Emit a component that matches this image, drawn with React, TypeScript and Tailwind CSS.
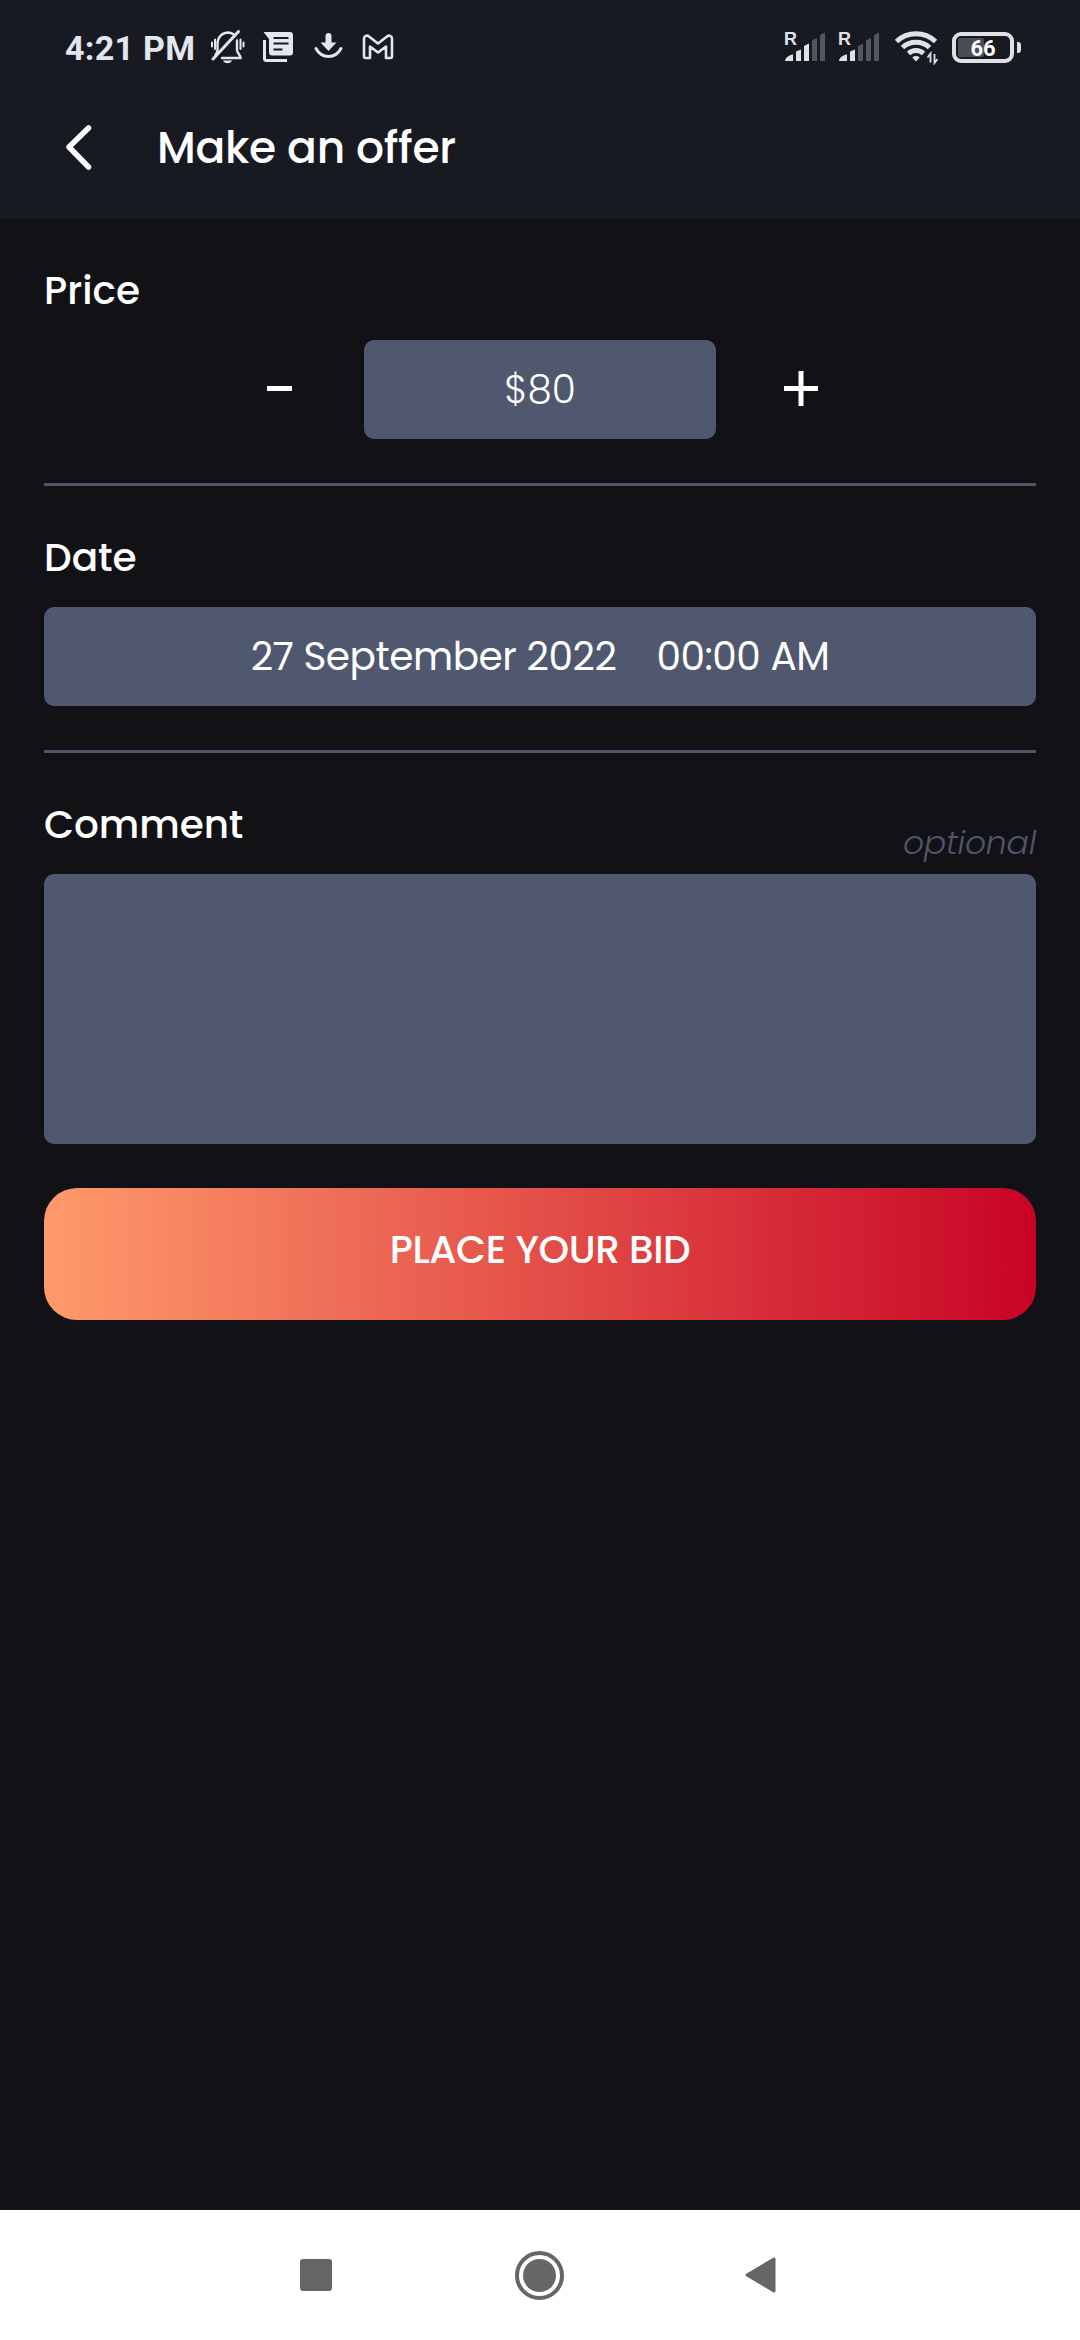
import { useState } from 'react'

const font = "font-['Poppins','Inter',sans-serif]";

function StatusBar() {
    return (
        <div className="h-[94px] flex items-center justify-between pl-[65px] pr-[59px] text-[#e3e6ee]">
            <div className="flex items-center">
                <span className="w-[130px] whitespace-nowrap font-[Roboto,sans-serif] font-bold text-[34px] leading-[40px] tracking-[0.3px] relative top-[1px]">4:21 PM</span>
                <svg className="ml-[15px]" width="36" height="36" viewBox="0 0 36 36" fill="none" stroke="currentColor" strokeWidth="2.4" strokeLinecap="round">
                    <path d="M7.500 21V15C7.500 8.500 11.500 4 17.500 3.500c2.500 0 4.500 .6 6 1.800M27 11.500v9.500c0 3 3.500 4.500 3.500 8H12M7.500 21c0 2-1 3.500-2 5" />
                    <path d="M28.500 2.500L3 30" strokeWidth="3" />
                    <path d="M2 13.500v4M5 10.500v9.500M30.500 10.500v9.500M33.500 13.500v4" strokeWidth="2" />
                    <path d="M13 31.500h9c-.7 1.800-2.300 2.700-4.500 2.700s-3.800-.9-4.500-2.700z" fill="currentColor" stroke="none" />
                </svg>
                <svg className="ml-[16px]" width="32" height="32" viewBox="0 0 32 32">
                    <path d="M1.500 1H28a3 3 0 0 1 3 3v17.500a3 3 0 0 1-3 3H10a3 3 0 0 1-3-3V8z" fill="currentColor" />
                    <path d="M11.500 7h15M11.500 12.500h15M11.500 18.500h9" stroke="#181a22" strokeWidth="2.200" />
                    <path d="M2.500 9v18.500a2 2 0 0 0 2 2H25" fill="none" stroke="currentColor" strokeWidth="3" />
                </svg>
                <svg className="ml-[19px]" width="32" height="30" viewBox="0 0 32 30">
                    <path d="M12.500 4a3 3 0 0 1 6 0v6.500h5L15.500 19 7.500 10.500h5z" fill="currentColor" />
                    <path d="M3 16.500C6 22 10 24.500 15.500 24.500S25 22 28 16.500" fill="none" stroke="currentColor" strokeWidth="3" strokeLinecap="round" />
                </svg>
                <svg className="ml-[17px]" width="32" height="26" viewBox="0 0 32 26" fill="none" stroke="currentColor" strokeWidth="2.600" strokeLinejoin="round">
                    <path d="M2 4.500C2 1.800 5 .9 7 2.500l9 7 9-7c2-1.600 5-.7 5 2V22.500a1.500 1.500 0 0 1-1.500 1.500H24V12.500l-8 6-8-6V24H3.500A1.500 1.500 0 0 1 2 22.500z" />
                </svg>
            </div>
            <div className="flex items-center text-[#dfe1e6]">
                <Signal strength={3} />
                <Signal strength={2} />
                <svg className="ml-[3px]" width="44" height="36" viewBox="0 0 44 36" fill="none" stroke="currentColor" strokeWidth="5">
                    <path d="M2.500 12.500C13.500 2.300 30.500 2.300 41.500 12.500" />
                    <path d="M8.500 18.500c7.500-7 19.500-7 27 0" />
                    <path d="M14.500 24.500c4.300-4 10.700-4 15 0" />
                    <path d="M18.300 28.500a5.500 5.500 0 0 1 7.400 0L22 32.500z" fill="currentColor" stroke="none" />
                    <path d="M36.500 33.500v-9l-3 4M40.500 25v9l3-4" strokeWidth="1.800" />
                </svg>
                <div className="ml-[14px] w-[62px] h-[31px] rounded-[9px] border-4 border-[#dfe1e6] p-[2px] flex relative">
                    <div className="w-[26px] bg-[#4b4d53] rounded-[2px]"></div>
                    <span className="absolute inset-0 text-center font-[Roboto,sans-serif] font-bold text-[22px] leading-[25px] text-white">66</span>
                </div>
                <div className="ml-[3px] w-[4px] h-[11px] rounded-r-[3px] bg-[#dfe1e6]"></div>
            </div>
        </div>
    )
}

function Signal({ strength }: { strength: number }) {
    const bars = [
        'M0 30c0-3 4-6 8-6.500V30z',
        'M11 30V20.500l5-2V30z',
        'M19 30V15l5-2.500V30z',
        'M27 30V9.500L32 7v23z',
        'M35 30V4l5-2.500V30z',
    ];
    return (
        <svg className="mr-[11px]" width="43" height="40" viewBox="-2 -4 43 40">
            {bars.map((d, i) => (
                <path key={i} d={d} fill={i < strength ? '#dfe1e6' : '#54565d'} />
            ))}
            <text x="-1" y="14" fontFamily="Liberation Sans, sans-serif" fontSize="18" fontWeight="700" fill="#dfe1e6">R</text>
        </svg>
    )
}

function Header() {
    return (
        <div className="h-[125px] pb-[17px] flex items-center pl-[64px]">
            <svg width="30" height="48" viewBox="0 0 30 48" fill="none" stroke="#ffffff" strokeWidth="5.500" strokeLinecap="round" strokeLinejoin="round">
                <path d="M24.500 4L5 23l19.500 20" />
            </svg>
            <h1 className="ml-[63px] text-[44px] leading-[60px] font-medium tracking-[-0.3px]">Make an offer</h1>
        </div>
    )
}

function Divider() {
    return <div className="mt-[44px] h-[3px] bg-[#50556a]"></div>
}

export default function App() {
    const [price, setPrice] = useState(80);

    return (
        <div className={`${font} w-[1080px] h-[2340px] flex flex-col bg-[#111116] text-white`}>
            <div className="bg-[#181a22]">
                <StatusBar />
                <Header />
            </div>
            <div className="flex-1 px-[44px]">
                <div className="pt-[44px]">
                    <h2 className="h-[77px] text-[39px] leading-[56px] font-medium">Price</h2>
                    <div className="flex items-center justify-center">
                        <button className="w-[42px] h-[60px] mr-[63px] flex items-center justify-center" onClick={() => setPrice(price - 1)}>
                            <span className="w-[25px] h-[5px] mr-[1px] mb-[2px] bg-white"></span>
                        </button>
                        <div className="w-[352px] h-[99px] pt-[2px] rounded-[10px] bg-[#50586f] flex items-center justify-center text-[39px] font-light">${price}</div>
                        <button className="w-[42px] h-[60px] ml-[63px] flex items-center justify-center" onClick={() => setPrice(price + 1)}>
                            <svg className="ml-[2px] mb-[2px]" width="34" height="35" viewBox="0 0 34 35" fill="none" stroke="#ffffff" strokeWidth="5">
                                <path d="M0 17.500h34M17 0v35" />
                            </svg>
                        </button>
                    </div>
                    <Divider />
                </div>
                <div className="pt-[44px]">
                    <h2 className="h-[77px] text-[39px] leading-[56px] font-medium">Date</h2>
                    <div className="h-[99px] pt-[2px] rounded-[10px] bg-[#50586f] flex items-center justify-center text-[39px] tracking-[-0.45px]">
                        <span>27 September 2022</span>
                        <span className="ml-[40px]">00:00 AM</span>
                    </div>
                    <Divider />
                </div>
                <div className="pt-[44px]">
                    <div className="h-[77px] flex justify-between">
                        <h2 className="text-[39px] leading-[56px] font-medium tracking-[-0.1px]">Comment</h2>
                        <span className="mt-[24px] text-[33px] leading-[44px] font-light italic tracking-[-0.2px] text-[#50556a]">optional</span>
                    </div>
                    <textarea className="block w-full h-[270px] p-5 rounded-[10px] bg-[#50586f] resize-none outline-none text-[39px]"></textarea>
                </div>
                <button className="mt-[44px] w-full h-[132px] pb-[7px] rounded-[33px] bg-linear-to-r/srgb from-[#ff9a6c] to-[#c80425] text-[39px] font-medium tracking-[-0.45px]">PLACE YOUR BID</button>
            </div>
            <div className="h-[130px] bg-white flex items-center pl-[300px]">
                <div className="w-[32px] h-[32px] rounded-[3px] bg-[#666666]"></div>
                <div className="ml-[183px] w-[49px] h-[49px] rounded-full border-4 border-[#666666] flex items-center justify-center">
                    <div className="w-[33px] h-[33px] rounded-full bg-[#666666]"></div>
                </div>
                <svg className="ml-[181px]" width="32" height="38" viewBox="0 0 32 38">
                    <path d="M2 19L29 3v32z" fill="#666666" stroke="#666666" strokeWidth="3" strokeLinejoin="round" />
                </svg>
            </div>
        </div>
    )
}
